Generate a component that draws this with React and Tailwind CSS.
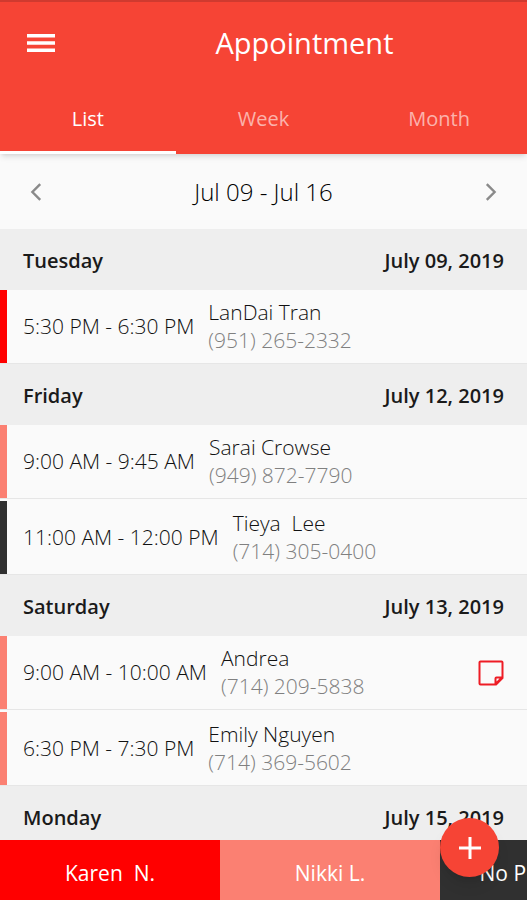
import React, { useState } from 'react';
import clsx from 'clsx';

const tabs = ['List', 'Week', 'Month'];

const days = [
  {
    day: 'Tuesday',
    date: 'July 09, 2019',
    items: [
      { time: '5:30 PM - 6:30 PM', name: 'LanDai Tran', phone: '(951) 265-2332', color: 'bg-[#ff0000]' },
    ],
  },
  {
    day: 'Friday',
    date: 'July 12, 2019',
    items: [
      { time: '9:00 AM - 9:45 AM', name: 'Sarai Crowse', phone: '(949) 872-7790', color: 'bg-[#fb8072]' },
      { time: '11:00 AM - 12:00 PM', name: 'Tieya  Lee', phone: '(714) 305-0400', color: 'bg-[#303030]' },
    ],
  },
  {
    day: 'Saturday',
    date: 'July 13, 2019',
    items: [
      { time: '9:00 AM - 10:00 AM', name: 'Andrea', phone: '(714) 209-5838', color: 'bg-[#fb8072]', note: true },
      { time: '6:30 PM - 7:30 PM', name: 'Emily Nguyen', phone: '(714) 369-5602', color: 'bg-[#fb8072]' },
    ],
  },
  { day: 'Monday', date: 'July 15, 2019', items: [] },
];

const staff = [
  { name: 'Karen  N.', color: 'bg-[#ff0000]' },
  { name: 'Nikki L.', color: 'bg-[#fb8072]' },
  { name: 'No Preference', color: 'bg-[#303030]' },
];

function MenuIcon() {
  return (
    <svg viewBox="0 0 28 20" className="h-5 w-7" fill="currentColor" aria-hidden="true">
      <path d="M0 1h28v3.4H0zM0 8.3h28v3.4H0zM0 15.6h28V19H0z" />
    </svg>
  );
}

function Chevron({ flip }) {
  return (
    <svg
      viewBox="0 0 12 18"
      className={clsx('h-[18px] w-3', flip && 'rotate-180')}
      fill="none"
      stroke="currentColor"
      strokeWidth="2.4"
      aria-hidden="true"
    >
      <path d="M10.2 1.2 2.4 9l7.8 7.8" />
    </svg>
  );
}

function NoteIcon() {
  return (
    <svg viewBox="0 0 26 26" className="size-[26px]" fill="none" stroke="#ee1c25" strokeWidth="2" strokeLinejoin="round" aria-hidden="true">
      <path d="M2.5 1.5h21a1 1 0 0 1 1 1V18l-6.5 6.5H2.5a1 1 0 0 1-1-1v-21a1 1 0 0 1 1-1z" />
      <path d="M17.500 24V18.500a1 1 0 0 1 1-1H24L17.500 24" />
    </svg>
  );
}

function DayHeader({ day, date }) {
  return (
    <h2 className="flex h-[61px] items-center justify-between bg-[#eeeeee] px-[23px] pt-0.5 text-xl font-semibold text-[#1a1a1a]">
      <span>{day}</span>
      <span>{date}</span>
    </h2>
  );
}

function Appointment({ time, name, phone, color, note }) {
  return (
    <li className="flex h-[74px] items-center border-b border-[#e6e6e6] pr-[23px]">
      <span className={clsx('mr-4 w-[7px] self-stretch', color)} />
      <span className="text-[21px] font-light text-[#111]">{time}</span>
      <span className="ml-3.5 flex flex-1 flex-col pb-0.5 text-[21px] leading-7 font-light">
        <span className="whitespace-pre text-[#111]">{name}</span>
        <span className="text-[#808080]">{phone}</span>
      </span>
      {note && (
        <button type="button" aria-label="View note">
          <NoteIcon />
        </button>
      )}
    </li>
  );
}

export default function App() {
  const [active, setActive] = useState('List');

  return (
    <div className="flex h-screen flex-col overflow-hidden bg-[#fafafa] font-['Open_Sans',sans-serif]">
      <header className="z-10 border-t-2 border-[#d03a2f] bg-[#f64435] text-white shadow-md">
        <div className="grid grid-cols-[1fr_auto_1fr] items-center px-[27px] py-3.5">
          <button type="button" aria-label="Menu" className="justify-self-start">
            <MenuIcon />
          </button>
          <h1 className="pl-[82px] text-[29px] leading-[54px]">Appointment</h1>
        </div>
        <nav className="grid grid-cols-3">
          {tabs.map(t => (
            <button
              key={t}
              type="button"
              onClick={() => setActive(t)}
              className={clsx(
                'h-[70px] border-b-[3px] pt-0.5 text-xl font-medium',
                t === active ? 'border-white' : 'border-transparent text-white/60'
              )}
            >
              {t}
            </button>
          ))}
        </nav>
      </header>

      <div className="flex h-[75px] shrink-0 items-center justify-between px-[30px] text-[#8a8a8a]">
        <button type="button" aria-label="Previous week">
          <Chevron />
        </button>
        <span className="text-2xl font-light text-black">Jul 09 - Jul 16</span>
        <button type="button" aria-label="Next week">
          <Chevron flip />
        </button>
      </div>

      <main className="min-h-0 flex-1 overflow-hidden">
        {days.map(d => (
          <section key={d.day}>
            <DayHeader day={d.day} date={d.date} />
            <ul className="flex flex-col gap-0.5">
              {d.items.map(a => (
                <Appointment key={a.name} {...a} />
              ))}
            </ul>
          </section>
        ))}
      </main>

      <footer className="relative shrink-0">
        <div className="flex h-[60px] overflow-hidden">
          {staff.map(s => (
            <button
              key={s.name}
              type="button"
              className={clsx('w-[220px] shrink-0 pt-2 text-[21px] whitespace-pre text-white', s.color)}
            >
              {s.name}
            </button>
          ))}
        </div>
        <button
          type="button"
          aria-label="Add appointment"
          className="absolute -top-[22px] right-7 flex size-[59px] items-center justify-center rounded-full bg-[#f64435] text-white shadow-lg"
        >
          <svg viewBox="0 0 22 22" className="size-[22px]" fill="currentColor" aria-hidden="true">
            <path d="M9.500 0h3v9.500H22v3h-9.500V22h-3v-9.500H0v-3h9.500z" />
          </svg>
        </button>
      </footer>
    </div>
  );
}
